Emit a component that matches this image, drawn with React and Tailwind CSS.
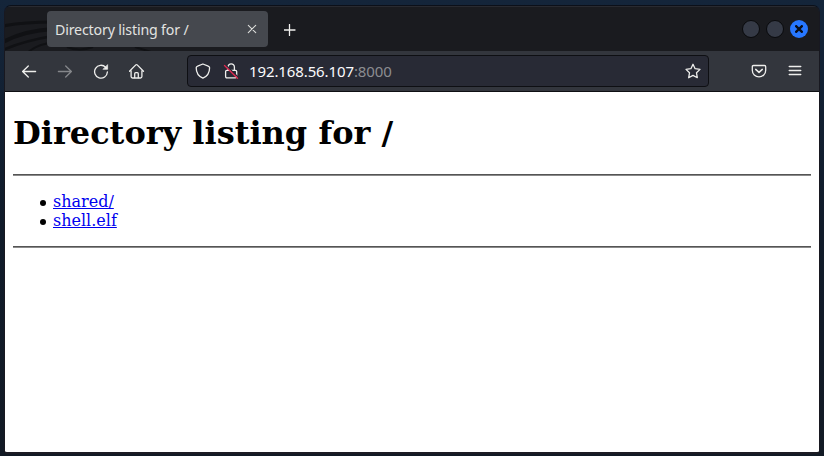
const stroke = {
  fill: 'none',
  stroke: 'currentColor',
  strokeWidth: 1.3,
  strokeLinecap: 'round',
  strokeLinejoin: 'round',
};

function Icon({ children, className = '' }) {
  return (
    <svg viewBox="0 0 16 16" className={`h-4 w-4 shrink-0 ${className}`} {...stroke}>
      {children}
    </svg>
  );
}

function TabBar() {
  return (
    <div className="relative flex h-[44px] shrink-0 items-center overflow-hidden bg-[#1a1b1f] pl-[42px] pr-[11px]">
      <svg className="absolute left-0 top-0 h-[44px] w-[150px]" viewBox="0 0 150 44" fill="none" stroke="#101114">
        <path d="M-2 19 Q18 15 48 15" strokeWidth="3" />
        <path d="M-2 35 Q18 24 48 22" strokeWidth="4" />
        <path d="M-2 43 Q18 34 48 29" strokeWidth="2.5" />
        <path d="M22 46 Q34 36 48 36" strokeWidth="2" />
        <path d="M62 40 Q74 45 88 40" strokeWidth="2" />
        <path d="M130 40 L146 45" strokeWidth="2" />
      </svg>
      <div className="relative mt-[-1px] flex h-9 w-[221px] items-center justify-between rounded-[4px] bg-[#45484e] pl-2 pr-[11px]">
        <span className="whitespace-nowrap pt-[2px] text-[14.2px] tracking-[-0.16px] text-[#e2e3e1]">Directory listing for /</span>
        <svg viewBox="0 0 10 10" className="h-[10px] w-[10px]" {...stroke} stroke="#dddedb" strokeWidth="1.1">
          <path d="M1.3 1.3 8.7 8.7M8.7 1.3 1.3 8.7" />
        </svg>
      </div>
      <svg viewBox="0 0 12 12" className="relative ml-[16px] mt-px h-3 w-3" {...stroke} stroke="#f0f0ee">
        <path d="M5.5.5v11M0 6h11" />
      </svg>
      <div className="ml-auto flex gap-[6px]">
        <div className="h-[18px] w-[18px] rounded-full border border-[#090a0c] bg-[#353a46]" />
        <div className="h-[18px] w-[18px] rounded-full border border-[#090a0c] bg-[#353a46]" />
        <div className="flex h-[18px] w-[18px] items-center justify-center rounded-full bg-[#2777ff]">
          <svg viewBox="0 0 8 8" className="h-2 w-2" fill="none" stroke="#080d18" strokeWidth="2.3">
            <path d="m.4.4 7.2 7.2M7.6.4.4 7.6" />
          </svg>
        </div>
      </div>
    </div>
  );
}

function Toolbar() {
  return (
    <div className="flex h-[41px] shrink-0 items-center border-b border-[#0e0f13] bg-[#33363d] pl-4 pr-4 text-[#eeeeec]">
      <div className="flex gap-5">
        <Icon><path d="M1.6 8.5h13M7.3 3 1.6 8.5 7.3 14" /></Icon>
        <Icon className="text-[#85878b]"><path d="M14.4 8.5h-13M8.7 3l5.7 5.5L8.7 14" /></Icon>
        <Icon>
          <path d="M12.6 4.2A6.4 6.4 0 1 0 14.4 9" />
          <path d="M14.6 2v4.3h-4.3Z" fill="currentColor" strokeWidth="0.7" />
        </Icon>
        <Icon>
          <path d="M.5 8.3 6.8 1.9q.7-.7 1.4 0l6.3 6.4M2.1 7.5v6q0 1.5 1.5 1.5h7.8q1.5 0 1.5-1.5v-6" />
          <path d="M5.7 14.7v-4q0-1 1-1h1.6q1 0 1 1v4" />
        </Icon>
      </div>
      <div className="ml-[42px] flex h-8 w-[522px] items-center rounded-[4px] border border-[#0e0f13] bg-[#282a35] pl-[7px] pr-[7px]">
        <Icon><path d="M7.9 1 13.2 3.1q1.4.5 1.4 1.7c0 5.2-2.6 8.7-6.7 10.4C3.8 13.5 1.2 10 1.2 4.8q0-1.2 1.4-1.7Z" /></Icon>
        <Icon className="ml-3">
          <path d="M5 7.3V4a3.2 3.2 0 0 1 6.4 0V7.3M3.9 7.3h8.5q1.3 0 1.3 1.3v5q0 1.3-1.3 1.3H3.9q-1.3 0-1.3-1.3v-5q0-1.3 1.3-1.3Z" />
          <path d="m2.6 2 12.4 12" stroke="#282a35" strokeWidth="1.5" />
          <path d="m1.5 2.5 13 12.7" stroke="#e22850" />
        </Icon>
        <span className="ml-[10px] text-[15px] leading-5 tracking-[-0.11px] text-[#fbfbfe]">
          192.168.56.107<span className="text-[#8c8d91]">:8000</span>
        </span>
        <Icon className="ml-auto">
          <path d="m8 1.3 2.1 4.4 4.9.7-3.5 3.4.8 4.9L8 12.4l-4.3 2.3.8-4.9L1 6.4l4.9-.7Z" />
        </Icon>
      </div>
      <div className="ml-auto flex gap-5">
        <Icon>
          <path d="M2.5 2.5h11q1.2 0 1.2 1.2v3.5a6.7 6.7 0 0 1-13.4 0V3.7q0-1.2 1.2-1.2Z" />
          <path d="m4.7 6.4 3.3 3 3.3-3" strokeWidth="1.5" />
        </Icon>
        <Icon><path d="M2.2 3.5h11.6M2.2 7.5h11.6M2.2 11.5h11.6" /></Icon>
      </div>
    </div>
  );
}

function Rule() {
  return <hr className="h-[2px] border-0 border-t border-[#555555] bg-[#8a8a8a]" />;
}

function Entry({ href, children }) {
  return (
    <li className="flex h-[19px] items-center gap-[7.5px]">
      <span className="mt-[2px] h-[6px] w-[6px] rounded-full bg-black" />
      <a href={href} className="text-[#0000ee] underline">{children}</a>
    </li>
  );
}

export default function App() {
  return (
    <div className="h-[456px] w-[824px] overflow-hidden bg-linear-to-b from-[#14253a] via-[#101b2a] to-[#121a25] px-1 pb-[2px] pt-[5px] font-['Noto_Sans',sans-serif]">
      <div className="flex h-[449px] flex-col overflow-hidden rounded-t-[7px] rounded-b-[3px] border border-t-[#0c1019] border-[#181820] border-b-2 border-b-[#1c1c24]">
        <div className="h-px shrink-0 bg-[#292a30]" />
        <TabBar />
        <Toolbar />
        <main className="flex-1 bg-white px-2 font-['DejaVu_Serif',serif] text-base text-black">
          <h1 className="pb-[22px] pt-[22px] text-[32px] font-bold leading-[38px]">Directory listing for /</h1>
          <Rule />
          <ul className="py-4 pl-[26.5px] leading-[19px] text-black">
            <Entry href="#shared">shared/</Entry>
            <Entry href="#shell">shell.elf</Entry>
          </ul>
          <Rule />
        </main>
      </div>
    </div>
  );
}
